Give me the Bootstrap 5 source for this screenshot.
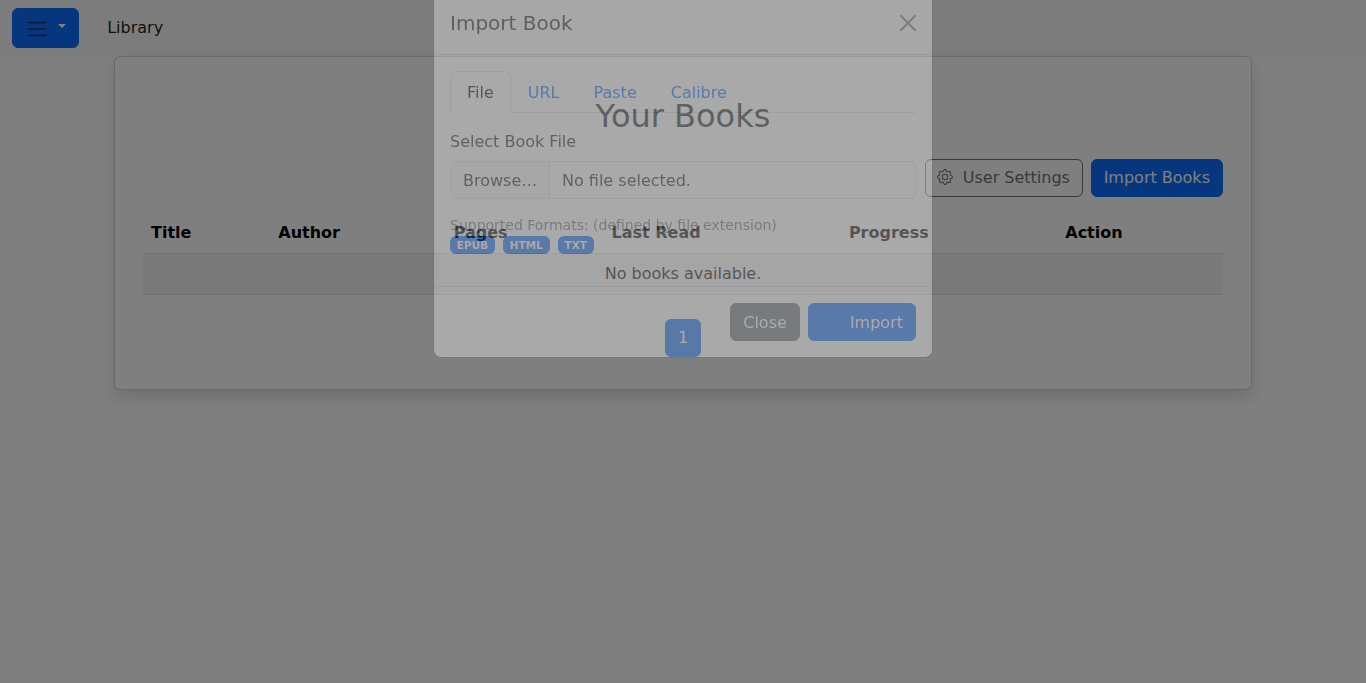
<!DOCTYPE html>
<html lang="en">
<head>
<meta charset="utf-8">
<meta name="viewport" content="width=device-width, initial-scale=1">
<title>Library</title>
<link href="https://cdn.jsdelivr.net/npm/bootstrap@5.3.0/dist/css/bootstrap.min.css" rel="stylesheet">
<style>
body { font-family: "DejaVu Sans", sans-serif; min-height: 100vh; }
.menu-btn { height: 40px; width: 67px; }
.menu-btn .navbar-toggler-icon { width: 24px; height: 24px; margin-top: 1px; }
.menu-btn::after { margin-left: 9px; margin-bottom: 5px; }
.site-title { margin-left: 28.2px; }
.library-card { padding: 40px 28.2px 32px; border-radius: 6px; }
.books-table { --bs-table-color: #000; --bs-table-striped-color: #000; color: #000; border-color: #dee2e6; }
.books-table th { color: #000; }
.gear { vertical-align: -.125em; margin-right: 9.5px; }
.settings-btn { padding-left: 11px; padding-right: 11.7px; }
.import-modal { opacity: .33; overflow: hidden; }
.import-modal .modal-dialog { margin-top: 28px; transform: translate(0, -37px) !important; }
.import-modal .modal-footer .btn { padding-top: 7px; padding-bottom: 5px; }
.import-modal .nav-link { padding-top: 9px; padding-bottom: 7px; }
.file-label { padding-top: 1px; margin-bottom: 7px; }
.file-field { height: 38px; overflow: hidden; }
.file-field .browse { background: #f8f9fa; width: 99px; padding-top: 1px; }
.file-field .picked { margin-left: 12px; padding-top: 1px; }
.formats { font-size: 14px; line-height: 21px; }
.formats .badge { font-size: 10.5px; }
</style>
</head>
<body>
<nav class="navbar bg-body-tertiary py-2">
  <div class="container-fluid justify-content-start">
    <button class="btn btn-primary dropdown-toggle menu-btn d-flex align-items-center" type="button" aria-label="Menu"><span class="navbar-toggler-icon"></span></button>
    <span class="site-title">Library</span>
  </div>
</nav>

<main class="row g-0 justify-content-center">
  <div class="col-10">
    <div class="card shadow library-card">
      <h2 class="text-center mb-4">Your Books</h2>
      <div class="d-flex justify-content-end gap-2 mb-3">
        <button class="btn btn-outline-secondary settings-btn" type="button"><svg class="gear" width="16" height="16" fill="currentColor" viewBox="0 0 16 16"><path d="M8 4.754a3.246 3.246 0 1 0 0 6.492 3.246 3.246 0 0 0 0-6.492zM5.754 8a2.246 2.246 0 1 1 4.492 0 2.246 2.246 0 0 1-4.492 0z"/><path d="M9.796 1.343c-.527-1.79-3.065-1.79-3.592 0l-.094.319a.873.873 0 0 1-1.255.52l-.292-.16c-1.64-.892-3.433.902-2.54 2.541l.159.292a.873.873 0 0 1-.52 1.255l-.319.094c-1.79.527-1.79 3.065 0 3.592l.319.094a.873.873 0 0 1 .52 1.255l-.16.292c-.892 1.64.901 3.434 2.541 2.54l.292-.159a.873.873 0 0 1 1.255.52l.094.319c.527 1.79 3.065 1.79 3.592 0l.094-.319a.873.873 0 0 1 1.255-.52l.292.16c1.64.893 3.434-.902 2.54-2.541l-.159-.292a.873.873 0 0 1 .52-1.255l.319-.094c1.79-.527 1.79-3.065 0-3.592l-.319-.094a.873.873 0 0 1-.52-1.255l.16-.292c.893-1.64-.902-3.433-2.541-2.54l-.292.159a.873.873 0 0 1-1.255-.52l-.094-.319zm-2.633.283c.246-.835 1.428-.835 1.674 0l.094.319a1.873 1.873 0 0 0 2.693 1.115l.291-.16c.764-.415 1.6.42 1.184 1.185l-.159.292a1.873 1.873 0 0 0 1.116 2.692l.318.094c.835.246.835 1.428 0 1.674l-.319.094a1.873 1.873 0 0 0-1.115 2.693l.16.291c.415.764-.42 1.6-1.185 1.184l-.291-.159a1.873 1.873 0 0 0-2.693 1.116l-.094.318c-.246.835-1.428.835-1.674 0l-.094-.319a1.873 1.873 0 0 0-2.692-1.115l-.292.16c-.764.415-1.6-.42-1.184-1.185l.159-.291A1.873 1.873 0 0 0 1.945 8.93l-.319-.094c-.835-.246-.835-1.428 0-1.674l.319-.094A1.873 1.873 0 0 0 3.06 4.377l-.16-.292c-.415-.764.42-1.6 1.185-1.184l.292.159a1.873 1.873 0 0 0 2.692-1.115l.094-.319z"/></svg>User Settings</button>
        <button class="btn btn-primary" type="button">Import Books</button>
      </div>
      <table class="table table-striped books-table mb-4">
        <thead><tr><th>Title</th><th>Author</th><th>Pages</th><th>Last Read</th><th>Progress</th><th>Action</th></tr></thead>
        <tbody><tr><td colspan="6" class="text-center">No books available.</td></tr></tbody>
      </table>
      <ul class="pagination justify-content-center mb-0">
        <li class="page-item active"><a class="page-link" href="#">1</a></li>
      </ul>
    </div>
  </div>
</main>

<div class="modal-backdrop show"></div>
<div class="modal d-block import-modal" tabindex="-1">
  <div class="modal-dialog">
    <div class="modal-content">
      <div class="modal-header">
        <h5 class="modal-title">Import Book</h5>
        <button type="button" class="btn-close" aria-label="Close"></button>
      </div>
      <div class="modal-body">
        <ul class="nav nav-tabs mb-3">
          <li class="nav-item"><a class="nav-link active" href="#">File</a></li>
          <li class="nav-item"><a class="nav-link" href="#">URL</a></li>
          <li class="nav-item"><a class="nav-link" href="#">Paste</a></li>
          <li class="nav-item"><a class="nav-link" href="#">Calibre</a></li>
        </ul>
        <div class="file-label">Select Book File</div>
        <div class="file-field d-flex border rounded mb-3">
          <span class="browse border-end d-flex align-items-center ps-2"><span class="ps-1">Browse…</span></span>
          <span class="picked d-flex align-items-center">No file selected.</span>
        </div>
        <div class="formats mb-3">
          <div class="text-secondary">Supported Formats: (defined by file extension)</div>
          <div class="d-flex gap-2"><span class="badge text-bg-primary">EPUB</span><span class="badge text-bg-primary">HTML</span><span class="badge text-bg-primary">TXT</span></div>
        </div>
      </div>
      <div class="modal-footer">
        <button type="button" class="btn btn-secondary">Close</button>
        <button type="button" class="btn btn-primary"><span class="spinner-border spinner-border-sm invisible me-2"></span> Import</button>
      </div>
    </div>
  </div>
</div>
<script src="https://cdn.jsdelivr.net/npm/bootstrap@5.3.0/dist/js/bootstrap.bundle.min.js"></script>
</body>
</html>
